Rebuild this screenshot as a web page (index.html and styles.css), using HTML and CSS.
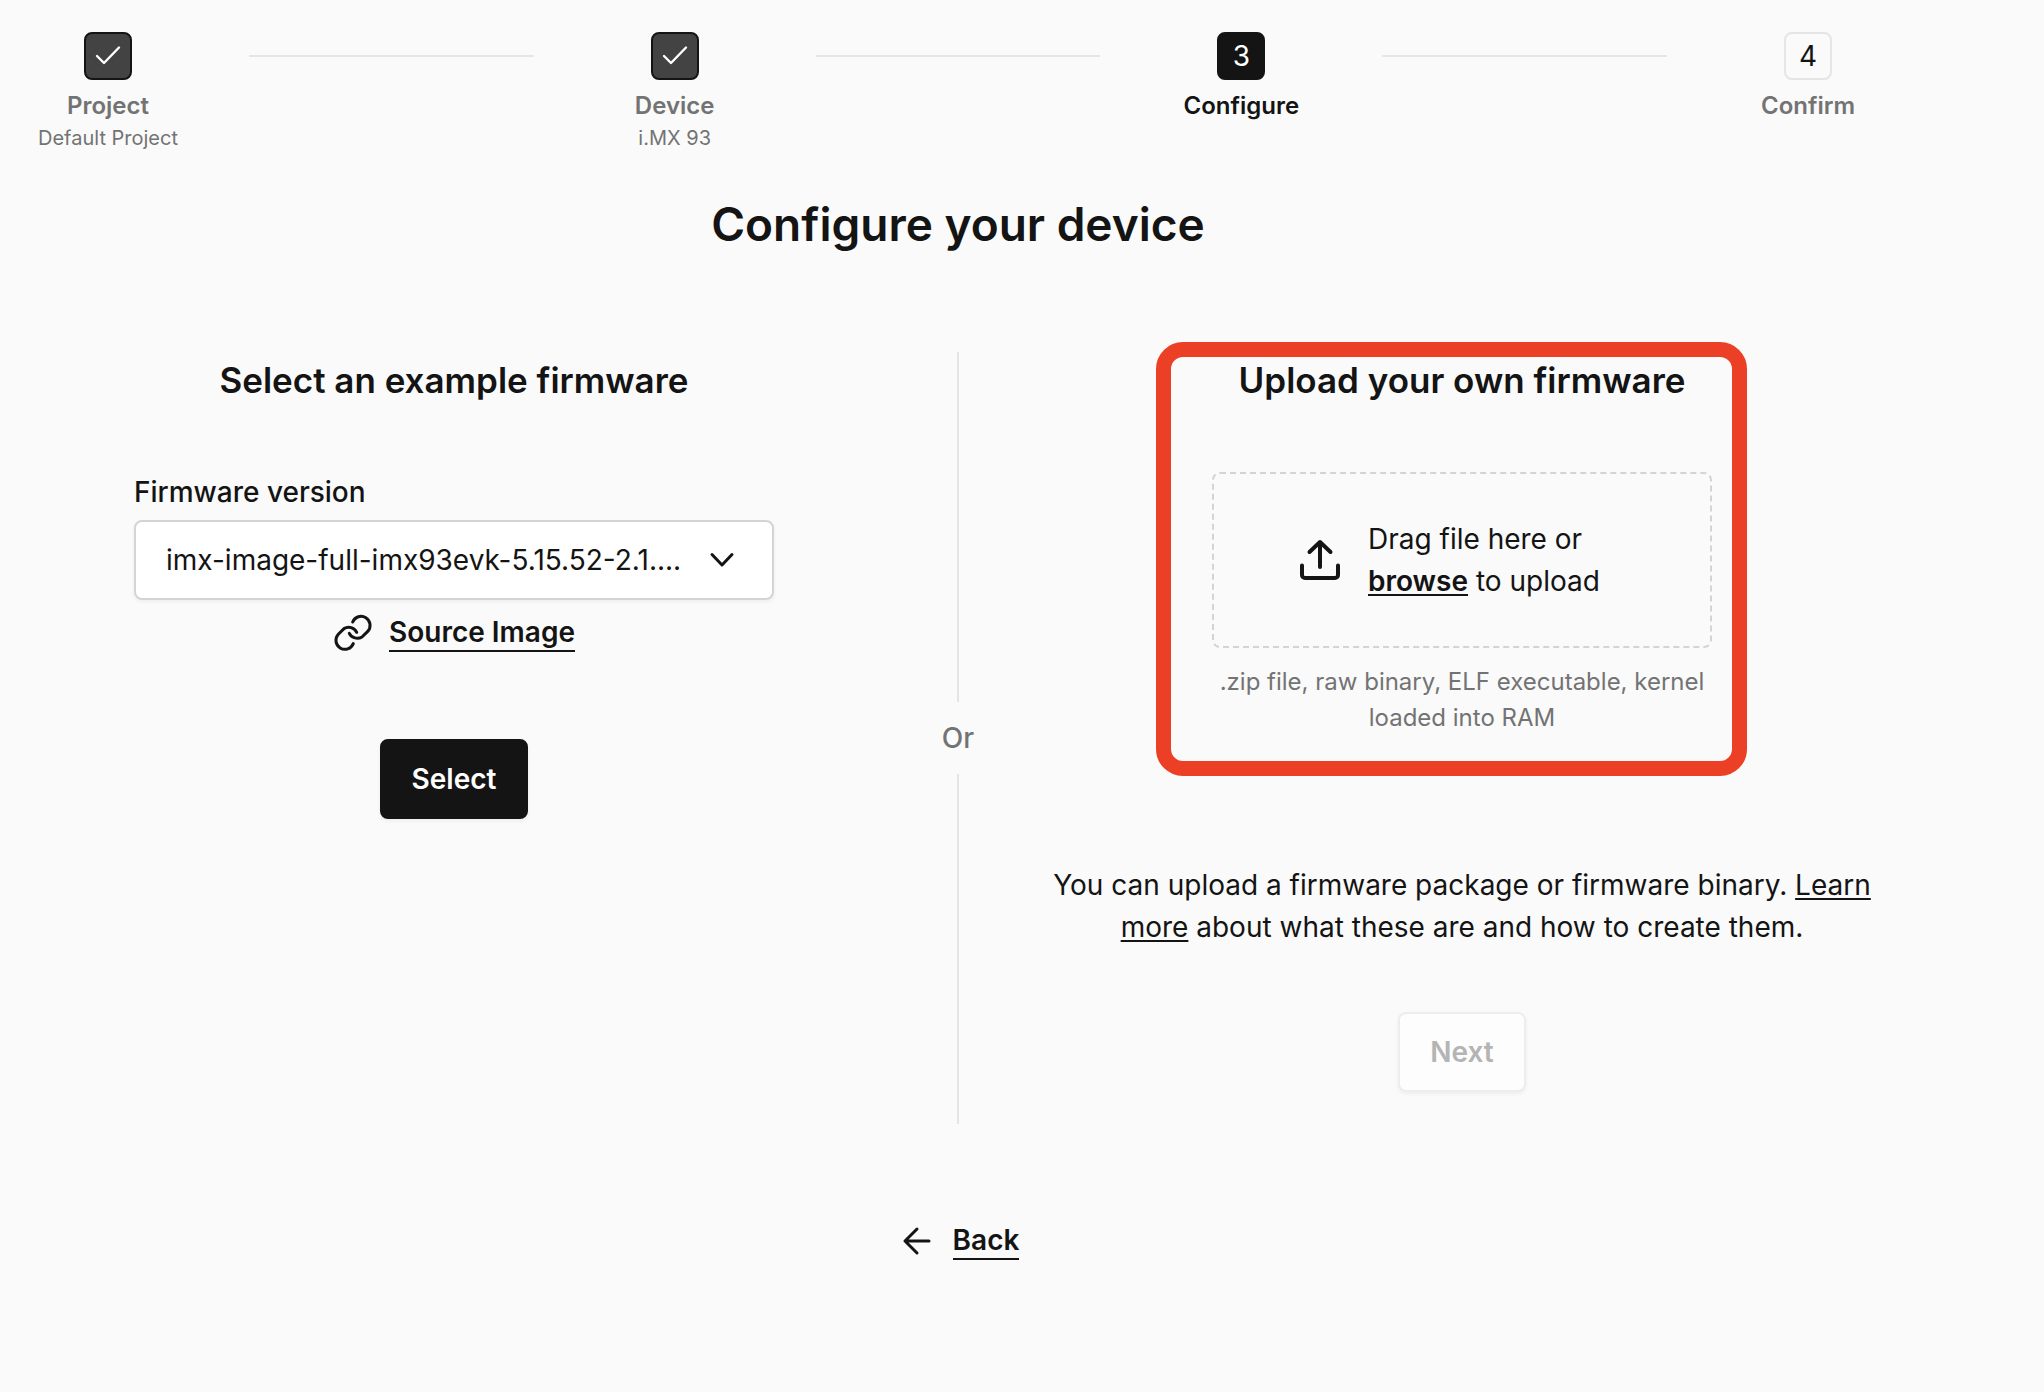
FILE: index.html
```html
<!DOCTYPE html>
<html lang="en">
<head>
<meta charset="utf-8">
<meta name="viewport" content="width=device-width, initial-scale=1">
<title>Configure your device</title>
<link rel="stylesheet" href="styles.css">
</head>
<body>
<main class="wizard">
  <ol class="stepper">
    <li class="step">
      <span class="step-box step-box-done"><svg class="check" viewBox="0 0 26 26" aria-hidden="true"><path d="M2 13 9 20 24 4.500"/></svg></span>
      <span class="step-label">Project</span>
      <span class="step-caption">Default Project</span>
    </li>
    <li class="step-line" role="presentation"></li>
    <li class="step">
      <span class="step-box step-box-done"><svg class="check" viewBox="0 0 26 26" aria-hidden="true"><path d="M2 13 9 20 24 4.500"/></svg></span>
      <span class="step-label">Device</span>
      <span class="step-caption">i.MX 93</span>
    </li>
    <li class="step-line" role="presentation"></li>
    <li class="step" aria-current="step">
      <span class="step-box step-box-current">3</span>
      <span class="step-label step-label-current">Configure</span>
    </li>
    <li class="step-line" role="presentation"></li>
    <li class="step">
      <span class="step-box">4</span>
      <span class="step-label">Confirm</span>
    </li>
  </ol>

  <h1 class="title">Configure your device</h1>

  <div class="options">
    <section class="option">
      <h2 class="option-title">Select an example firmware</h2>
      <div class="field">
        <label class="field-label" for="firmware">Firmware version</label>
        <div class="select-wrap">
          <select class="select" id="firmware">
            <option>imx-image-full-imx93evk-5.15.52-2.1....</option>
          </select>
          <svg class="chevron" viewBox="0 0 24 14" aria-hidden="true"><path d="M2 1.500 12 12 22 1.500"/></svg>
        </div>
      </div>
      <a class="icon-link source-link" href="#source">
        <svg class="link-icon" viewBox="0 0 36 36" aria-hidden="true"><path d="M19.700 7A9 9 0 1 1 34.700 16.400L29 22A9 9 0 0 1 16.300 18.300"/><path d="M20.300 28.600A9 9 0 1 1 5.300 19.200L11 13.600A9 9 0 0 1 23.700 17.300"/></svg>
        <span class="icon-link-text">Source Image</span>
      </a>
      <button class="button button-primary" type="button">Select</button>
    </section>

    <div class="divider"><span class="divider-text">Or</span></div>

    <section class="option">
      <div class="highlight"></div>
      <h2 class="option-title">Upload your own firmware</h2>
      <label class="dropzone">
        <input class="file-input" type="file">
        <svg class="upload-icon" viewBox="0 0 48 48" aria-hidden="true"><path d="M24 31V6M13.500 16 24 6l10.500 10M6 29.500v9.500a3 3 0 0 0 3 3h30a3 3 0 0 0 3-3V29.500"/></svg>
        <span class="dropzone-text">Drag file here or <span class="browse">browse</span> to upload</span>
      </label>
      <p class="hint">.zip file, raw binary, ELF executable, kernel loaded into RAM</p>
      <p class="note">You can upload a firmware package or firmware binary. <a class="note-link" href="#learn">Learn more</a> about what these are and how to create them.</p>
      <button class="button button-disabled" type="button" disabled>Next</button>
    </section>
  </div>

  <a class="icon-link back-link" href="#back">
    <svg class="arrow-icon" viewBox="0 0 36 36" aria-hidden="true"><path d="M32 18H8M20 6 8 18l12 12"/></svg>
    <span class="icon-link-text">Back</span>
  </a>
</main>
</body>
</html>
```

FILE: styles.css
```css
* {
  box-sizing: border-box;
}

body {
  margin: 0;
  background: #fafafa;
  color: #141414;
  font-family: Inter, "Liberation Sans", sans-serif;
  font-size: 28px;
  line-height: 42px;
}

h1,
h2,
p {
  margin: 0;
}

svg {
  fill: none;
  stroke: currentColor;
  stroke-linecap: round;
  stroke-linejoin: round;
  flex: none;
  overflow: visible;
}

.wizard {
  display: flex;
  flex-direction: column;
  padding: 32px 128px 64px 0;
}

.stepper {
  display: flex;
  align-items: flex-start;
  gap: 33px;
  margin: 0;
  padding: 0;
  list-style: none;
}

.step {
  display: flex;
  flex-direction: column;
  align-items: center;
  width: 216px;
}

.step-line {
  flex: 1;
  height: 2px;
  margin-top: 23px;
  background: #e5e5e5;
}

.step-box {
  display: flex;
  align-items: center;
  justify-content: center;
  width: 48px;
  height: 48px;
  margin-bottom: 8px;
  border: 2px solid #e5e5e5;
  border-radius: 8px;
}

.step-box-done {
  border-color: #141414;
  background: #434343;
  color: #fff;
}

.step-box-current {
  border-color: #141414;
  background: #141414;
  color: #fff;
}

.check {
  width: 26px;
  height: 26px;
  stroke-width: 2.4;
}

.step-label {
  color: #737373;
  font-size: 24px;
  font-weight: 600;
  line-height: 36px;
}

.step-label-current {
  color: #141414;
}

.step-caption {
  color: #737373;
  font-size: 20px;
  line-height: 28px;
}

.title {
  margin-top: 36px;
  font-size: 46px;
  font-weight: 600;
  line-height: 72px;
  text-align: center;
}

.options {
  display: grid;
  grid-template-columns: 1fr 100px 1fr;
  margin-top: 92px;
}

.option {
  position: relative;
  display: flex;
  flex-direction: column;
  align-items: center;
  padding: 0 40px 32px;
}

.option-title {
  margin-bottom: 64px;
  font-size: 35px;
  font-weight: 600;
  line-height: 56px;
}

.field {
  display: flex;
  flex-direction: column;
  gap: 8px;
  width: 100%;
  max-width: 640px;
}

.field-label {
  font-weight: 500;
  line-height: 40px;
}

.select-wrap {
  display: grid;
  align-items: center;
}

.select {
  grid-area: 1 / 1;
  appearance: none;
  width: 100%;
  height: 80px;
  padding: 0 88px 0 30px;
  border: 2px solid #d4d4d4;
  border-radius: 8px;
  background: #fff;
  box-shadow: 0 2px 4px rgba(0, 0, 0, 0.05);
  color: inherit;
  font: inherit;
}

.chevron {
  grid-area: 1 / 1;
  justify-self: end;
  width: 24px;
  height: 14px;
  margin-right: 40px;
  stroke-width: 3;
  pointer-events: none;
}

.icon-link {
  display: flex;
  align-items: center;
  gap: 20px;
  color: inherit;
  font-weight: 600;
  line-height: 36px;
  text-decoration: none;
}

.icon-link-text {
  border-bottom: 2px solid;
}

.source-link {
  margin: 14px 0 87px;
}

.link-icon,
.arrow-icon {
  width: 36px;
  height: 36px;
  stroke-width: 3;
}

.button {
  height: 80px;
  padding: 0 30px;
  border: 2px solid;
  border-radius: 8px;
  box-shadow: 0 2px 4px rgba(0, 0, 0, 0.05);
  font: inherit;
  font-weight: 600;
}

.button-primary {
  border-color: #141414;
  background: #141414;
  color: #fff;
}

.button-disabled {
  border-color: #ededed;
  background: #fdfdfd;
  color: #b4b4b4;
}

.divider {
  display: flex;
  flex-direction: column;
  align-items: center;
  gap: 15px;
  color: #737373;
}

.divider::before,
.divider::after {
  content: "";
  flex: 1;
  width: 2px;
  background: #e5e5e5;
}

.divider-text {
  font-weight: 500;
}

.highlight {
  position: absolute;
  top: -10px;
  left: 148px;
  width: 591px;
  height: 434px;
  border: 15px solid #eb4026;
  border-radius: 27px;
  pointer-events: none;
}

.dropzone {
  display: flex;
  align-items: center;
  justify-content: center;
  gap: 24px;
  width: 100%;
  max-width: 500px;
  padding: 44px 0;
  border: 2px dashed #d4d4d4;
  border-radius: 8px;
}

.file-input {
  position: absolute;
  width: 1px;
  height: 1px;
  opacity: 0;
}

.upload-icon {
  width: 48px;
  height: 48px;
  stroke-width: 4;
}

.dropzone-text {
  width: 260px;
}

.browse {
  font-weight: 600;
  text-decoration: underline;
  text-decoration-thickness: 2px;
  text-underline-offset: 3px;
}

.hint {
  max-width: 500px;
  margin: 16px 0 128px;
  color: #737373;
  font-size: 24px;
  line-height: 36px;
  text-align: center;
}

.note {
  margin-bottom: 64px;
  text-align: center;
}

.note-link {
  color: inherit;
  text-decoration: underline;
  text-decoration-thickness: 2px;
  text-underline-offset: 3px;
}

.back-link {
  align-self: center;
  margin-top: 98px;
}
```
